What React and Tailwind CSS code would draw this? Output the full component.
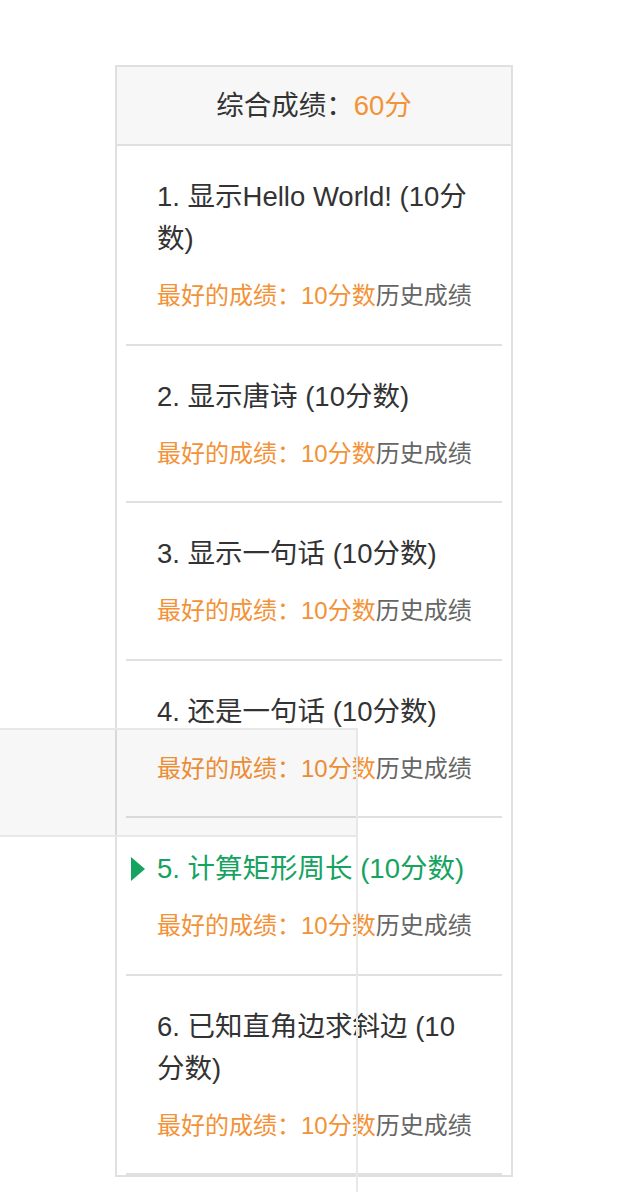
import React from "react";

const items = [
  { title: "1. 显示Hello World! (10分数)" },
  { title: "2. 显示唐诗 (10分数)" },
  { title: "3. 显示一句话 (10分数)" },
  { title: "4. 还是一句话 (10分数)" },
  { title: "5. 计算矩形周长 (10分数)", active: true },
  { title: "6. 已知直角边求斜边 (10分数)" },
];

const font = { fontFamily: '"Liberation Sans", "Noto Sans CJK SC", sans-serif' };

const ScoreItem = ({ title, active }) => (
  <div className="relative mx-[9px] border-b-2 border-[#e0e0e0] pl-[31px] pr-[24px] pt-[30px] pb-[29.5px]">
    {active && (
      <span className="absolute left-[5px] top-[39px] h-0 w-0 border-y-[12px] border-l-[14px] border-y-transparent border-l-[#16a35f]" />
    )}
    <div
      className={`text-[27.5px] leading-[42px] ${
        active ? "text-[#16a35f]" : "text-[#333333]"
      }`}
    >
      {title}
    </div>
    <div className="mt-[18px] whitespace-nowrap text-[24px] leading-[36px]">
      <span className="text-[#f39237]">最好的成绩：10分数</span>
      <span className="text-[#666666]">历史成绩</span>
    </div>
  </div>
);

export default function App() {
  return (
    <div className="relative min-h-[1192px] overflow-hidden bg-white" style={font}>
      <div className="pt-[65px] pl-[115px]">
        <div className="w-[398px] border-2 border-[#e0e0e0]">
          {/* header */}
          <div className="flex h-[79px] items-center justify-center border-b-2 border-[#e0e0e0] bg-[#f7f7f7] text-[27.5px] text-[#333333]">
            <span>综合成绩：</span>
            <span className="text-[#f39237]">60分</span>
          </div>
          {items.map((it) => (
            <ScoreItem key={it.title} {...it} />
          ))}
        </div>
      </div>

      {/* floating overlay on the left */}
      <div className="absolute left-[-2px] top-[728px] h-[109px] w-[360px] border-2 border-[#e8e8e8] bg-black/[0.03]" />
      <div className="absolute left-[356px] top-[728px] bottom-0 w-[2px] bg-[#e8e8e8]" />
    </div>
  );
}
